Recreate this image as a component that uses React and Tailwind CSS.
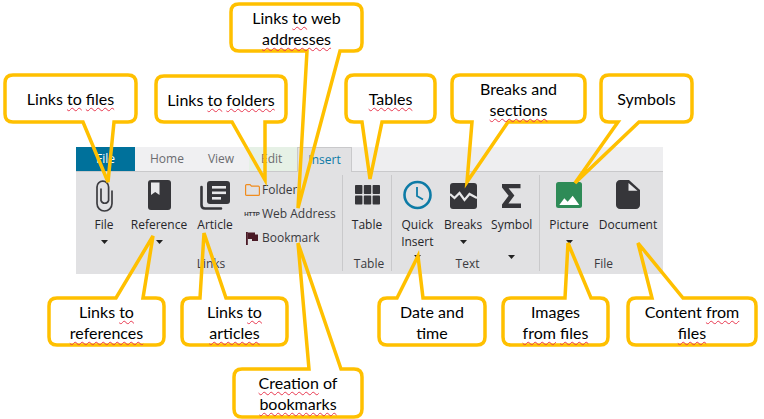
import React from "react";

const YELLOW = "#ffc000";

// outline of a callout: rounded box with a tail on the top or bottom edge
const calloutPath = ({ x, y, w, h, tail }) => {
  const r = 8;
  const right = x + w;
  const bottom = y + h;
  const [a, b, tx, ty] = tail;
  const top = ty < y;
  return [
    `M${x + r} ${y}`,
    top ? `H${a} L${tx} ${ty} L${b} ${y}` : "",
    `H${right - r} Q${right} ${y} ${right} ${y + r}`,
    `V${bottom - r} Q${right} ${bottom} ${right - r} ${bottom}`,
    top ? "" : `H${b} L${tx} ${ty} L${a} ${bottom}`,
    `H${x + r} Q${x} ${bottom} ${x} ${bottom - r}`,
    `V${y + r} Q${x} ${y} ${x + r} ${y} Z`,
  ].join(" ");
};

const Squiggle = ({ children }) => (
  <span className="underline decoration-wavy decoration-[#e8384f] decoration-1 underline-offset-2">
    {children}
  </span>
);

const callouts = [
  { x: 5, y: 75, w: 131, h: 47, tail: [83, 114, 108, 182], box: "left-[5px] top-[75px] w-[131px] h-[47px]", text: <>Links <Squiggle>to</Squiggle> <Squiggle>files</Squiggle></> },
  { x: 156, y: 76, w: 130, h: 46, tail: [232, 265, 265, 180], box: "left-[156px] top-[76px] w-[130px] h-[46px]", text: <>Links <Squiggle>to</Squiggle> <Squiggle>folders</Squiggle></> },
  { x: 231, y: 4, w: 131, h: 47, tail: [307, 340, 298, 208], box: "left-[231px] top-[4px] w-[131px] h-[47px]", text: <>Links <Squiggle>to</Squiggle> web<br /><Squiggle>addresses</Squiggle></> },
  { x: 346, y: 75, w: 89, h: 47, tail: [362, 382, 370, 179], box: "left-[346px] top-[75px] w-[89px] h-[47px]", text: <Squiggle>Tables</Squiggle> },
  { x: 452, y: 75, w: 133, h: 47, tail: [472, 508, 467, 182], box: "left-[452px] top-[75px] w-[133px] h-[47px]", text: <>Breaks and<br /><Squiggle>sections</Squiggle></> },
  { x: 601, y: 75, w: 91, h: 47, tail: [618, 639, 575, 183], box: "left-[601px] top-[75px] w-[91px] h-[47px]", text: "Symbols" },
  { x: 49, y: 298, w: 115, h: 47, tail: [116, 143, 153, 236], box: "left-[49px] top-[298px] w-[115px] h-[47px]", text: <>Links <Squiggle>to</Squiggle><br /><Squiggle>references</Squiggle></> },
  { x: 182, y: 298, w: 105, h: 47, tail: [200, 226, 204, 233], box: "left-[182px] top-[298px] w-[105px] h-[47px]", text: <>Links <Squiggle>to</Squiggle><br /><Squiggle>articles</Squiggle></> },
  { x: 234, y: 369, w: 128, h: 48, tail: [309, 341, 298, 243], box: "left-[234px] top-[369px] w-[128px] h-[48px]", text: <><Squiggle>Creation</Squiggle> of<br /><Squiggle>bookmarks</Squiggle></> },
  { x: 379, y: 298, w: 106, h: 47, tail: [397, 423, 418, 256], box: "left-[379px] top-[298px] w-[106px] h-[47px]", text: <>Date and<br />time</> },
  { x: 503, y: 298, w: 105, h: 47, tail: [565, 591, 568, 243], box: "left-[503px] top-[298px] w-[105px] h-[47px]", text: <>Images<br /><Squiggle>from</Squiggle> <Squiggle>files</Squiggle></> },
  { x: 628, y: 298, w: 128, h: 47, tail: [652, 683, 638, 243], box: "left-[628px] top-[298px] w-[128px] h-[47px]", text: <>Content <Squiggle>from</Squiggle><br /><Squiggle>files</Squiggle></> },
];

const Caret = () => (
  <svg width="7" height="4" viewBox="0 0 7 4" className="block">
    <path d="M0 0H7L3.5 4Z" fill="#222" />
  </svg>
);

const PaperclipIcon = () => (
  <svg width="17" height="32" viewBox="0 0 17 32" fill="none" stroke="#3c3c40" strokeWidth="1.7" strokeLinecap="round">
    <path d="M16 11V23.5A7.5 7.5 0 0 1 1 23.5V7A5.8 5.8 0 0 1 12.6 7V20.5A4 4 0 0 1 5 20.5V9" />
  </svg>
);

const BookIcon = () => (
  <svg width="23" height="30" viewBox="0 0 23 30">
    <rect width="23" height="30" rx="3" fill="#36363a" />
    <path d="M3 2.5H11.5V15L7.2 12L3 15Z" fill="#e8e8ea" />
  </svg>
);

const ArticleIcon = () => (
  <svg width="30" height="30" viewBox="0 0 30 30">
    <path d="M1.5 7V25C1.5 27.5 3 28.5 5 28.5H21" fill="none" stroke="#36363a" strokeWidth="2.6" strokeLinecap="round" />
    <rect x="7" y="1" width="23" height="23" rx="3" fill="#36363a" />
    <rect x="12" y="6" width="14" height="2.6" fill="#e8e8ea" />
    <rect x="12" y="11.5" width="14" height="2.6" fill="#e8e8ea" />
    <rect x="12" y="17" width="9" height="2.6" fill="#e8e8ea" />
  </svg>
);

const FolderIcon = () => (
  <svg width="15" height="12" viewBox="0 0 15 12" fill="none" stroke="#f08c1e" strokeWidth="1.2">
    <path d="M.6 10.4V1.6C.6 1 1 .6 1.6 .6H5L6.5 2.2H13.4C14 2.2 14.4 2.6 14.4 3.2V10.4C14.4 11 14 11.4 13.4 11.4H1.6C1 11.4 .6 11 .6 10.4Z" />
  </svg>
);

const FlagIcon = () => (
  <svg width="12" height="13" viewBox="0 0 12 13">
    <rect x="0" y="0" width="1.8" height="13" fill="#4a1a26" />
    <path d="M1.8 .5H9V2.5H12V9H6V7H1.8Z" fill="#4a1a26" />
  </svg>
);

const TableIcon = () => (
  <svg width="25" height="20" viewBox="0 0 25 20" fill="#36363a">
    <rect x="0" y="0" width="7.4" height="9" rx=".8" />
    <rect x="8.8" y="0" width="7.4" height="9" rx=".8" />
    <rect x="17.6" y="0" width="7.4" height="9" rx=".8" />
    <rect x="0" y="10.6" width="7.4" height="9" rx=".8" />
    <rect x="8.8" y="10.6" width="7.4" height="9" rx=".8" />
    <rect x="17.6" y="10.6" width="7.4" height="9" rx=".8" />
  </svg>
);

const ClockIcon = () => (
  <svg width="29" height="30" viewBox="0 0 29 30" fill="none" stroke="#0d7ba6">
    <circle cx="14.5" cy="15" r="13" strokeWidth="2.6" />
    <path d="M14 7V16L20 19.5" strokeWidth="1.8" />
  </svg>
);

const BreaksIcon = () => (
  <svg width="27" height="26" viewBox="0 0 27 26">
    <rect width="27" height="26" rx="3" fill="#36363a" />
    <path d="M0 11L4.5 15L9.5 10L14.5 17L19.5 11L27 15" fill="none" stroke="#e8e8ea" strokeWidth="2.2" />
  </svg>
);

const SigmaIcon = () => (
  <svg width="19" height="24" viewBox="0 0 19 24">
    <path d="M0 0H18.5V4.2H6.6L12.4 11.6L6.4 19.6H19V24H0V20.4L6.6 11.8L0 3.4Z" fill="#36363a" />
  </svg>
);

const PictureIcon = () => (
  <svg width="26" height="26" viewBox="0 0 26 26">
    <rect width="26" height="26" rx="2.5" fill="#2e8b57" />
    <path d="M3.3 23L8.3 16.3L11.7 19.7L16.7 13.7L23.3 23Z" fill="#fff" />
  </svg>
);

const DocumentIcon = () => (
  <svg width="24" height="29" viewBox="0 0 24 29">
    <path d="M4 0H13L24 10V25C24 27.2 22.2 29 20 29H4C1.8 29 0 27.2 0 25V4C0 1.8 1.8 0 4 0Z" fill="#36363a" />
    <path d="M12.5 3L21.5 10.7H12.5Z" fill="#e8e8ea" />
  </svg>
);

// big ribbon button: icon, label, optional caret
const RibbonButton = ({ icon, label, caret, className }) => (
  <div className={`flex flex-col items-center ${className}`}>
    <div className="h-[38px] shrink-0 pt-[8px] flex items-start justify-center">{icon}</div>
    <div className="shrink-0 text-center text-[12px] leading-[17px] whitespace-nowrap text-[#26262a] mt-[6px]">
      {label}
    </div>
    {caret && <div className={`shrink-0 ${caret}`}><Caret /></div>}
  </div>
);

const SmallButton = ({ icon, label }) => (
  <div className="h-[24px] flex items-center text-[12px] text-[#3a3a3e] whitespace-nowrap">
    <div className="w-[20px] flex justify-center">{icon}</div>
    {label}
  </div>
);

const RibbonGroup = ({ label, children, className }) => (
  <div className={`flex flex-col ${className}`}>
    <div className="flex h-[84px]">{children}</div>
    <div className="h-[18px] pl-1 text-center text-[12px] leading-[16px] text-[#3a3a3e]">{label}</div>
  </div>
);

const Separator = () => <div className="w-px my-[3px] bg-[#c9c9cb]" />;

const Ribbon = () => (
  <div className="w-[587px] ml-[76px] font-['Open_Sans',sans-serif]">
    <div className="h-[25px] flex bg-[#eeeef0] text-[12px] border-b border-[#c9c9cb]">
      <div className="w-[59px] bg-[#00719b] text-white flex items-center justify-center">File</div>
      <div className="w-[114px] flex items-center text-[#6c6c70] bg-[#f0f0f2]">
        <span className="ml-[15px]">Home</span>
        <span className="ml-[24px]">View</span>
      </div>
      <div className="w-[48px] flex items-center bg-[#e6f1e6] text-[#6c6c70]">
        <span className="ml-[12px]">Edit</span>
      </div>
      <div className="w-[55px] h-[25px] flex items-center justify-center bg-[#e1e1e3] border border-b-0 border-[#c9c9cb] text-[#0d7ba6]">
        Insert
      </div>
    </div>
    <div className="h-[102px] flex bg-[#e1e1e3]">
      <RibbonGroup label="Links" className="w-[266px]">
        <RibbonButton className="w-[52px] ml-[2px]" icon={<PaperclipIcon />} label="File" caret="mt-[7px]" />
        <RibbonButton className="w-[58px]" icon={<BookIcon />} label="Reference" caret="mt-[7px]" />
        <RibbonButton className="w-[54px]" icon={<ArticleIcon />} label="Article" />
        <div className="flex flex-col pt-[6px]">
          <SmallButton icon={<FolderIcon />} label="Folder" />
          <SmallButton
            icon={<span className="font-['Liberation_Sans',sans-serif] text-[6px] font-bold text-[#36363a]">HTTP</span>}
            label="Web Address"
          />
          <SmallButton icon={<FlagIcon />} label="Bookmark" />
        </div>
      </RibbonGroup>
      <Separator />
      <RibbonGroup label="Table" className="w-[48px]">
        <RibbonButton className="w-[50px]" icon={<div className="pt-[5px]"><TableIcon /></div>} label="Table" />
      </RibbonGroup>
      <Separator />
      <RibbonGroup label="Text" className="w-[147px]">
        <RibbonButton
          className="w-[50px] ml-[1px]"
          icon={<ClockIcon />}
          label={<>Quick<br />Insert</>}
          caret="mt-[5px]"
        />
        <RibbonButton className="w-[44px]" icon={<div className="pt-[3px]"><BreaksIcon /></div>} label="Breaks" caret="mt-[7px]" />
        <RibbonButton className="w-[56px]" icon={<div className="pt-[4px]"><SigmaIcon /></div>} label="Symbol" caret="mt-[22px]" />
      </RibbonGroup>
      <Separator />
      <RibbonGroup label="File" className="flex-1">
        <RibbonButton className="w-[58px]" icon={<div className="pt-[2px]"><PictureIcon /></div>} label="Picture" caret="mt-[7px]" />
        <RibbonButton className="w-[60px]" icon={<DocumentIcon />} label="Document" />
      </RibbonGroup>
    </div>
  </div>
);

export default function App() {
  return (
    <div className="relative w-[764px] h-[419px] bg-white overflow-hidden pt-[147px]">
      <Ribbon />
      <svg className="absolute inset-0" width="764" height="419" fill="none" stroke={YELLOW} strokeWidth="3.5">
        {callouts.map((c, i) => (
          <path key={i} d={calloutPath(c)} />
        ))}
      </svg>
      {callouts.map((c, i) => (
        <div
          key={i}
          className={`absolute ${c.box} flex items-center justify-center text-center text-[16px] leading-[21px] text-black whitespace-nowrap font-['Lato',sans-serif]`}
        >
          <div>{c.text}</div>
        </div>
      ))}
    </div>
  );
}
